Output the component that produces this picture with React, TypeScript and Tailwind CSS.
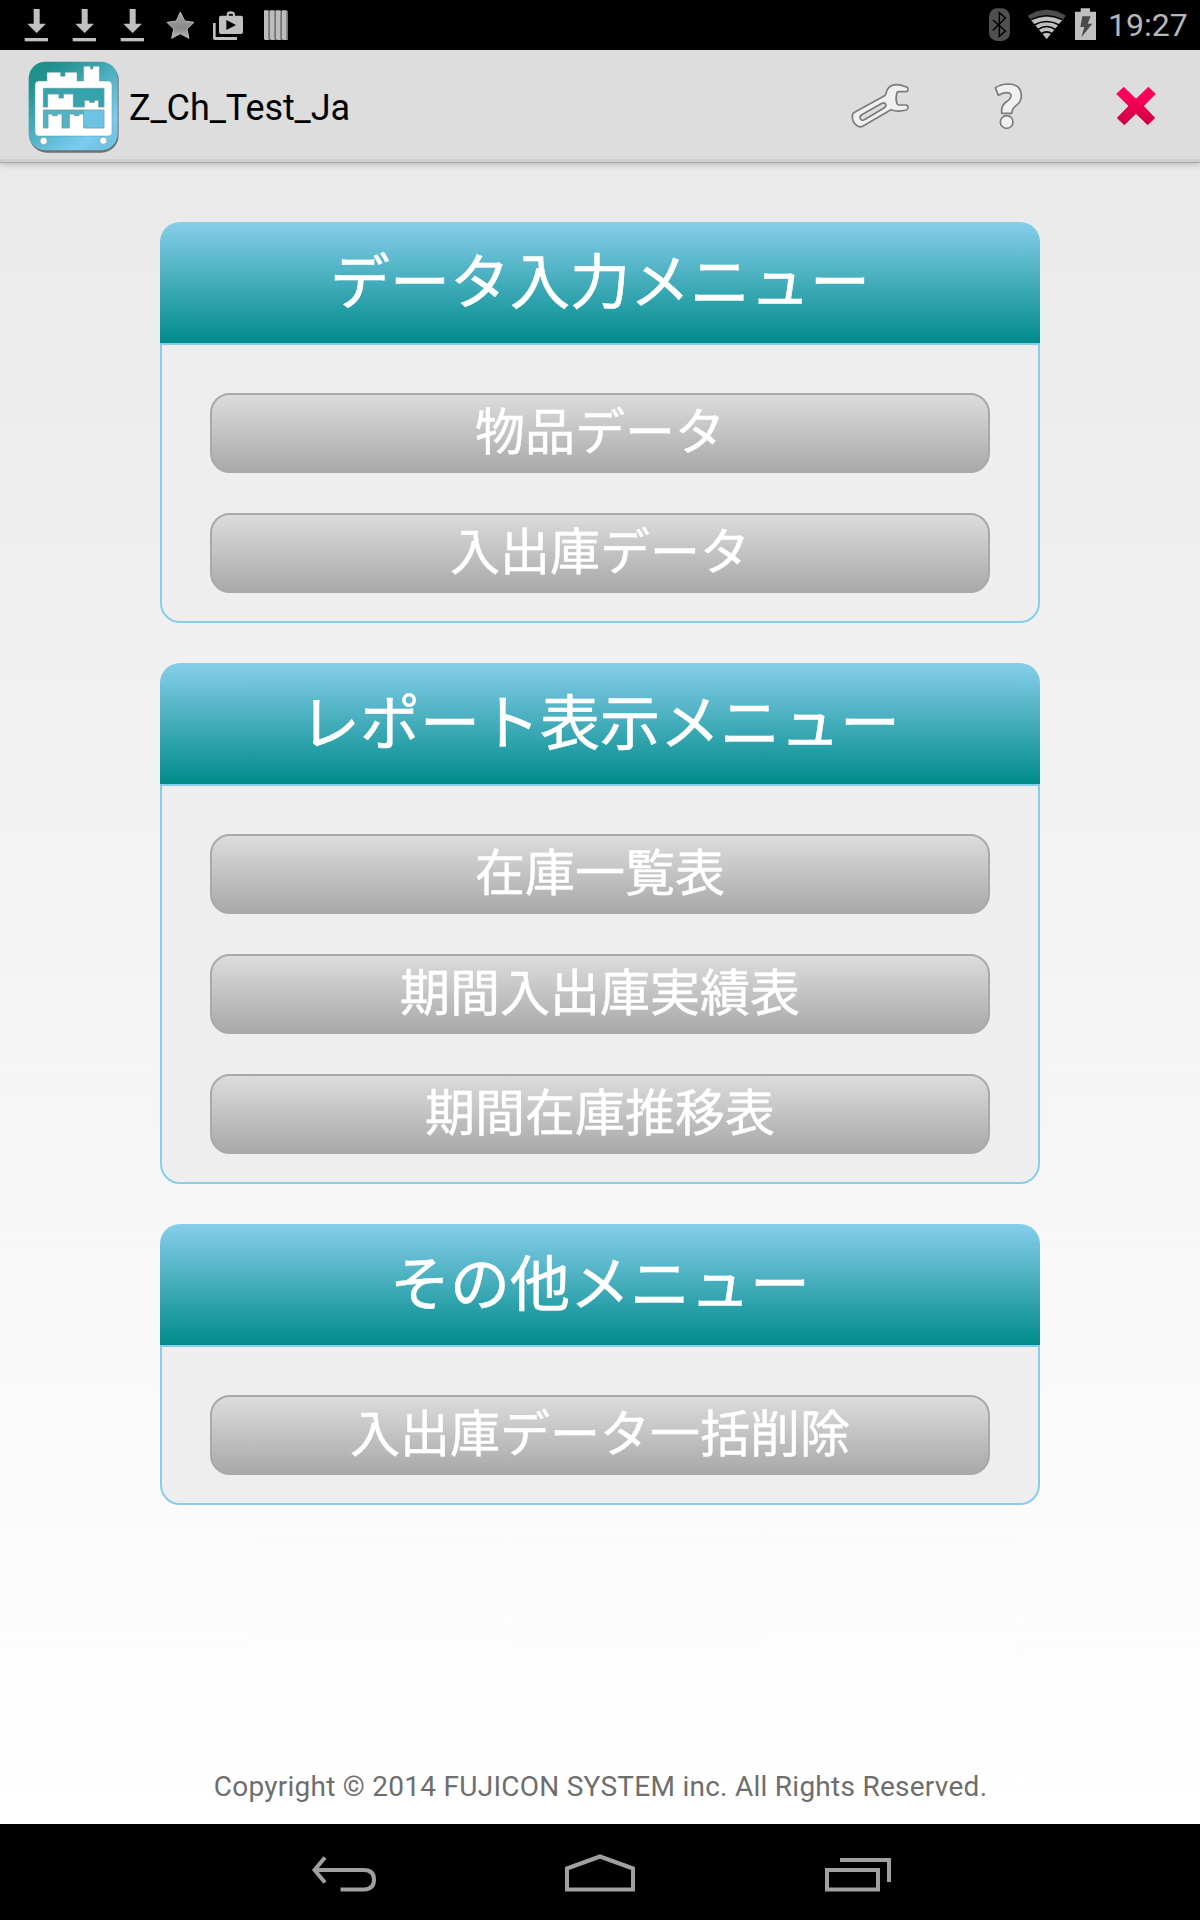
import React from "react";

const groups = [
  { title: "データ入力メニュー", items: ["物品データ", "入出庫データ"] },
  { title: "レポート表示メニュー", items: ["在庫一覧表", "期間入出庫実績表", "期間在庫推移表"] },
  { title: "その他メニュー", items: ["入出庫データ一括削除"] },
];

function DownloadIcon() {
  return (
    <svg className="h-[50px] w-12" viewBox="36 0 144 150" fill="#c0c0c0">
      <path d="M101 27h18v44h19l-28 28-28-28h19z" />
      <path d="M74 114h70v10H74z" />
    </svg>
  );
}

function StatusBar() {
  return (
    <div className="flex h-[50px] items-center bg-black pl-3 pr-3">
      <DownloadIcon />
      <DownloadIcon />
      <DownloadIcon />
      <svg className="h-[50px] w-12" viewBox="468 0 144 150">
        <defs>
          <linearGradient id="star" x1="0" y1="0" x2="0" y2="1">
            <stop offset="0" stopColor="#a8a8a8" />
            <stop offset="0.6" stopColor="#8a8a8a" />
            <stop offset="1" stopColor="#b8b8b8" />
          </linearGradient>
        </defs>
        <path d="M541 36l13 27 28 4-21 20 6 28-26-14-26 14 6-28-20-20 28-4z" fill="url(#star)" stroke="#b8b8b8" strokeWidth="3" strokeLinejoin="round" />
      </svg>
      <svg className="h-[50px] w-12" viewBox="612 0 144 150" fill="#c0c0c0">
        <path d="M639 69h8v42h64v9h-66q-6 0-6-6z" />
        <path fillRule="evenodd" d="M663 47h17v-3q0-10 12-10t13 10v3h18q6 0 6 6v43q0 6-6 6h-60q-6 0-6-6V53q0-6 6-6zm23 0h13v-3q0-3-6.500-3t-6.500 3zM679 60v30l29-15z" />
      </svg>
      <svg className="h-[50px] w-12" viewBox="756 0 144 150">
        {[792, 810, 828, 846].map((x) => (
          <g key={x}>
            <path d={`M${x} 31h13l4 3v86h-13l-4-2z`} fill="#bdbdbd" />
            <path d={`M${x + 13} 33l4 2v84h-4z`} fill="#6e6e6e" />
          </g>
        ))}
      </svg>
      <div className="ml-auto flex items-center">
        <svg className="h-[50px] w-[37px]" viewBox="72 0 111 150">
          <rect x="87" y="25" width="63" height="98" rx="25" fill="#4f4f4f" />
          <path d="M99 60l37 33-18 16V38l18 16-37 37" fill="none" stroke="#000" strokeWidth="4.500" />
        </svg>
        <svg className="h-[50px] w-[50px]" viewBox="183 0 150 150">
          <path d="M203 47Q260 11 318 47L260 117z" fill="#4d4d4d" />
          <path d="M214 61Q260 39 306 61L260 117z" fill="#c0c0c0" />
          <path d="M214 61Q260 39 306 61" fill="none" stroke="#000" strokeWidth="4" transform="translate(0 -3)" />
          <path d="M222 75Q260 54 298 75M234 88Q260 71 286 88M244 101Q260 90 276 101" fill="none" stroke="#000" strokeWidth="5" />
        </svg>
        <svg className="h-[50px] w-[37px]" viewBox="333 0 111 150">
          <path d="M345 35h17V25h28v10h18v85h-63z" fill="#c0c0c0" />
          <path d="M367 49h25l-9 22h14l-33 41 9-31h-12z" fill="#4a4a4a" />
        </svg>
        <span className="w-20 text-[32px] leading-[51px] text-[#b8b8b8]">19:27</span>
      </div>
    </div>
  );
}

function AppIcon() {
  return (
    <svg className="h-28 w-[120px] shrink-0" viewBox="0 0 360 336">
      <defs>
        <linearGradient id="logo" x1="0.1" y1="0.15" x2="0.75" y2="1">
          <stop offset="0" stopColor="#1f908c" />
          <stop offset="0.08" stopColor="#239491" />
          <stop offset="0.85" stopColor="#7accf0" />
          <stop offset="1" stopColor="#72c4e6" />
        </linearGradient>
      </defs>
      <rect x="88" y="38" width="268" height="270" rx="52" fill="#707070" />
      <rect x="86" y="35" width="267" height="266" rx="50" fill="url(#logo)" />
      <path
        d="M117 93h24V67h41v12h13V67h36v26h20V49h20v8h8v-8h19v44h26q12 0 12 12v140q0 13-12 13H117q-12 0-12-13V105q0-12 12-12z"
        fill="#fff"
        stroke="#5f9ea5"
        strokeOpacity="0.6"
        strokeWidth="2.500"
      />
      <g stroke="#6e9ca3" strokeWidth="2.500">
        <path fill="#36a3ac" d="M130 115h182v56h-16v-20h-13v6h-14v-6h-16v20h-33v-39h-30v12h-13v-12h-34v39h-13z" />
        <path fill="#51b3c4" d="M130 180h182v54h-61v-42h-14v5h-14v-5h-15v42h-22v-42h-14v5h-14v-5h-14v42h-14z" />
      </g>
      <path d="M252 181h59v52h-59z" fill="#6dc3e3" />
      <circle cx="131" cy="273" r="11" fill="#fff" stroke="#6594a4" strokeWidth="2" />
      <circle cx="310" cy="272" r="11" fill="#fff" stroke="#6594a4" strokeWidth="2" />
    </svg>
  );
}

function ActionBar() {
  return (
    <header className="relative z-10 flex h-28 items-start border-b-[3px] border-[#cfcfcf] bg-[#dddddd] shadow-[0_1px_0_#a9a9a9,0_3px_6px_rgba(0,0,0,0.18)]">
      <AppIcon />
      <h1 className="ml-[9px] whitespace-nowrap text-[36px] leading-[116px] tracking-[-0.1px] text-black">Z_Ch_Test_Ja</h1>
      <div className="ml-auto flex">
        <button aria-label="設定">
          <svg className="h-28 w-[120px]" viewBox="0 0 360 336" fill="#f0f0f0" stroke="#7b7b7b" strokeWidth="5" strokeLinejoin="round">
            <path
              fillRule="evenodd"
              d="M101 188L191 139Q197 136 198 130Q203 104 231 104Q245 104 261 112Q265 114 264 120Q263 125 257 125H236Q231 125 230 132Q226 149 231 161Q232 165 237 165H258Q264 166 264 172Q264 178 259 180Q233 187 213 179L128 229Q117 234 106 223Q98 214 97 204Q96 192 101 188zM124 195L186 160Q194 156 197 163Q199 170 192 174L133 209Q125 214 121 206Q118 199 124 195z"
            />
          </svg>
        </button>
        <button aria-label="ヘルプ">
          <svg className="h-28 w-[130px]" viewBox="360 0 390 336" fill="#f0f0f0" stroke="#7b7b7b" strokeWidth="5" strokeLinejoin="round">
            <path d="M526 113Q543 102 565 102Q604 103 604 138Q604 155 588 167Q576 177 575 190H545V181Q545 166 558 156Q573 146 573 137Q573 128 559 128Q548 128 535 136z" />
            <circle cx="560" cy="216" r="19" />
          </svg>
        </button>
        <button aria-label="閉じる">
          <svg className="h-28 w-[130px]" viewBox="750 0 390 336">
            <defs>
              <linearGradient id="close" x1="0" y1="0" x2="0" y2="1">
                <stop offset="0" stopColor="#ff005c" />
                <stop offset="0.3" stopColor="#fa0057" />
                <stop offset="1" stopColor="#cb0041" />
              </linearGradient>
            </defs>
            <path
              d="M911 112L948 148L985 112L1006 132L970 168L1004 204L983 224L948 190L913 224L892 204L927 168L890 132z"
              fill="url(#close)"
              stroke="url(#close)"
              strokeWidth="3"
              strokeLinejoin="round"
            />
          </svg>
        </button>
      </div>
    </header>
  );
}

function MenuGroup({ title, items }: { title: string; items: string[] }) {
  return (
    <section>
      <h2 className="h-[121px] rounded-t-[20px] bg-linear-to-b/srgb from-[#87ceeb] to-[#008b8b] text-center text-[60px] leading-[123px] text-white [-webkit-text-stroke:0.6px_white]">
        {title}
      </h2>
      <div className="flex flex-col gap-10 rounded-b-[20px] border-2 border-[#87ceeb] bg-[#eeeeee] px-12 pb-7 pt-12">
        {items.map((item) => (
          <button
            key={item}
            className="h-20 rounded-[20px] border-2 border-[#a9a9a9] bg-linear-to-b/srgb from-[#dcdcdc] to-[#a9a9a9] text-center text-[50px] leading-[76px] text-white [-webkit-text-stroke:0.5px_white]"
          >
            <span className="block h-[76px]">{item}</span>
          </button>
        ))}
      </div>
    </section>
  );
}

function NavigationBar() {
  return (
    <nav className="flex h-24 justify-center bg-black">
      <svg className="h-24 w-64" viewBox="216 1824 256 96" fill="none" stroke="#a0a0a0" strokeWidth="4">
        <path d="M340.500 1889.500H364Q374 1889 374 1879.700Q374 1870 364 1870H315" />
        <path d="M325 1857.500L314.500 1870L325 1882.500" />
      </svg>
      <svg className="h-24 w-64" viewBox="472 1824 256 96" fill="none" stroke="#a0a0a0" strokeWidth="4">
        <path d="M567 1868.500L600 1856.500L633 1868.500V1889.500H567z" />
      </svg>
      <svg className="h-24 w-64" viewBox="728 1824 256 96" fill="none" stroke="#a0a0a0" strokeWidth="4">
        <path d="M827 1870H878V1889.500H827zM840 1860H889V1882" />
      </svg>
    </nav>
  );
}

export default function App() {
  return (
    <div className="flex h-[1920px] w-[1200px] flex-col overflow-hidden font-['Roboto','Noto_Sans_CJK_JP',sans-serif]">
      <StatusBar />
      <ActionBar />
      <main className="flex flex-1 flex-col bg-linear-to-b/srgb from-[#eaeaea] to-white px-40 pt-[60px]">
        <div className="flex flex-col gap-10">
          {groups.map((group) => (
            <MenuGroup key={group.title} title={group.title} items={group.items} />
          ))}
        </div>
        <footer className="mb-[17px] mt-auto whitespace-nowrap pl-px text-center text-[28px] leading-10 tracking-[0.26px] text-[#6e6e6e]">
          Copyright © 2014 FUJICON SYSTEM inc. All Rights Reserved.
        </footer>
      </main>
      <NavigationBar />
    </div>
  );
}
